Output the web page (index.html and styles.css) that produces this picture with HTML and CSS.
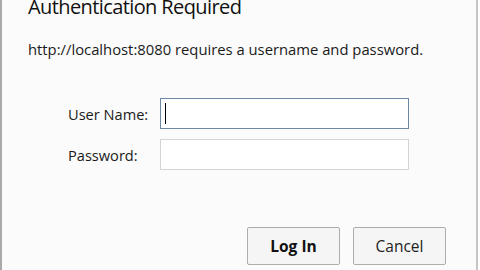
FILE: index.html
```html
<!DOCTYPE html>
<html>

<head>
    <title>Authentication Required</title>
    <link rel="stylesheet" href="styles.css">
</head>

<body>
    <div class="dialog">
        <h1>Authentication Required</h1>
        <p class="message">http://localhost:8080 requires a username and password.</p>

        <form class="login-form">
            <div class="field">
                <label for="username">User Name:</label>
                <div class="input focused" id="username"><span class="caret"></span></div>
            </div>
            <div class="field">
                <label for="password">Password:</label>
                <div class="input" id="password"></div>
            </div>
        </form>

        <div class="actions">
            <button type="button" class="btn primary">Log In</button>
            <button type="button" class="btn">Cancel</button>
        </div>
    </div>
</body>

</html>
```

FILE: styles.css
```css
body {
    margin: 0;
    background-color: #fefefe;
    font-family: "Open Sans", "Noto Sans", sans-serif;
    color: #1a1a1a;
    overflow: hidden;
}

.dialog {
    width: 474px;
    height: 270px;
    background-color: #fbfbfb;
    border-left: 2px solid #a9a9a9;
    border-right: 2px solid #c4c4c4;
}

h1 {
    margin: 0;
    padding: 0 0 0 26px;
    font-size: 20px;
    font-weight: normal;
    letter-spacing: -0.6px;
    line-height: 14px;
    color: #111;
}

.message {
    margin: 25px 0 0 26px;
    font-size: 14.8px;
    line-height: 20px;
}

.login-form {
    margin-top: 39px;
    display: flex;
    flex-direction: column;
    gap: 10px;
}

.field {
    display: flex;
    align-items: center;
}

.field label {
    width: 92px;
    padding-left: 66px;
    font-size: 14.6px;
}

.input {
    width: 247px;
    height: 29px;
    background-color: #fff;
    border: 1px solid #d4d4d4;
    display: flex;
    align-items: center;
}

.input.focused {
    border-color: #6d87a8;
}

.caret {
    width: 1px;
    height: 21px;
    margin-left: 4px;
    background-color: #000;
}

.actions {
    margin-top: 57px;
    padding-left: 245px;
    display: flex;
    gap: 13px;
}

.btn {
    width: 93px;
    height: 38px;
    font-family: "Open Sans", "Noto Sans", sans-serif;
    font-size: 15.5px;
    color: #222;
    background-color: #f5f5f5;
    border: 1px solid #adadad;
    border-radius: 2px;
}

.btn.primary {
    font-weight: bold;
    color: #111;
}
```
